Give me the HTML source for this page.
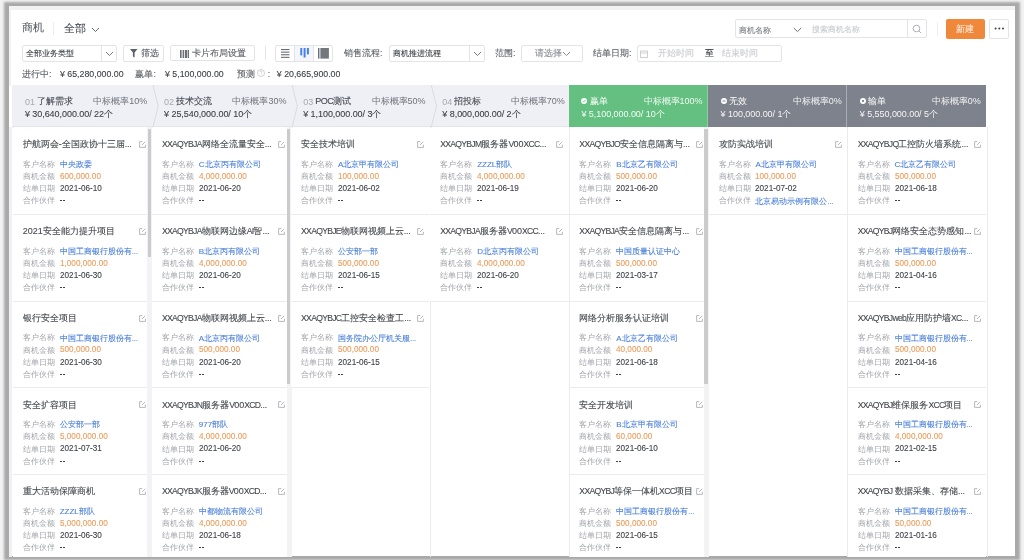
<!DOCTYPE html>
<html><head><meta charset="utf-8">
<style>
*{margin:0;padding:0;box-sizing:border-box}
html,body{width:1024px;height:560px;overflow:hidden;background:#f1f1f1;font-family:"Liberation Sans",sans-serif}
.t,.ctitle,.val,.hname,.hamt{-webkit-text-stroke:0.1px currentColor}
#shadow{position:absolute;left:3.5px;top:1.9px;width:1016px;height:558.1px;background:#a9a9a9;filter:blur(1.2px)}
#frame{position:absolute;left:9px;top:5.5px;width:1006px;height:550.7px;background:#fff;overflow:hidden}
#topstrip{position:absolute;left:0;top:0;width:1006px;height:4px;background:#f1f1f1}
.abs{position:absolute}
#root{position:absolute;left:0;top:0;width:1024px;height:560px;clip-path:inset(5.5px 9px 3.8px 9px);filter:url(#sb)}
.t{position:absolute;white-space:nowrap}
.box{position:absolute;border:1px solid #e3e4e8;border-radius:2px;background:#fff}
.hc{position:absolute;top:85px;height:42.2px;background:#eff0f5;border-bottom:1px solid #e5e5eb}
.hc.green,.hc.grayh{border-bottom:0}
.hc.green{background:#63c080}
.hc.grayh{background:#7e828c}
.hnum{position:absolute;top:96.6px;font-size:9px;line-height:10px;color:#a6a9b0;white-space:nowrap}
.hname{position:absolute;top:95.8px;font-size:9px;line-height:10px;color:#44474f;white-space:nowrap}
.hicon{position:absolute;top:97.5px;width:6px;height:6px;line-height:0}
.hrate{position:absolute;top:95.5px;font-size:9px;line-height:10px;color:#6f727a;text-align:right;white-space:nowrap}
.hamt{position:absolute;top:108.9px;font-size:9px;letter-spacing:-0.05px;line-height:10px;color:#3d4047;white-space:nowrap}
.w{color:#fff}
.hrate.w{color:rgba(255,255,255,0.9)}
.hamt.w{color:rgba(255,255,255,0.92)}
.chev{position:absolute;left:0;top:0;pointer-events:none}
.vline{position:absolute;top:127.3px;width:1px;height:440px;background:#ebebef}
.card{position:absolute;height:86.77px;background:#fff;border-bottom:1px solid #ebebef}
.ctitle{position:absolute;font-size:9px;line-height:10px;color:#45484e;white-space:nowrap}
.w{-webkit-text-stroke:0 !important}
.hname .l{letter-spacing:-0.45px}
.el{letter-spacing:-0.25px}
.ctitle .l{font-size:8.6px;letter-spacing:-0.7px}
.edit{position:absolute;width:7px;height:7px;line-height:0}
.lab{position:absolute;font-size:8px;line-height:9px;color:#a3a5ab;white-space:nowrap}
.val{position:absolute;font-size:8px;line-height:9px;white-space:nowrap}
.val.blue{color:#4a7fd9}
.val.orange{color:#e99c5c}
.val.dark{color:#3b3e45}
.val.num{font-size:8.8px;transform:scaleX(0.93);transform-origin:0 50%}
.dash{position:absolute;width:2px;height:1px;background:#3d4047}
.sb{position:absolute;width:3.2px;background:#cbcbce;border-radius:0.5px}
.track{position:absolute;width:5.2px;background:#f3f3f5}
</style></head><body><svg width="0" height="0" style="position:absolute"><filter id="sb" x="0" y="0" width="100%" height="100%"><feGaussianBlur stdDeviation="0.5"/></filter></svg>
<div id="shadow"></div><div id="frame"><div id="topstrip"></div><div style="position:absolute;left:0;top:0;width:1.6px;height:80px;background:#f2f2f2"></div></div>
<div id="root">
<!-- header -->
<div class="t" style="left:21.6px;top:20.9px;font-size:11.2px;line-height:13px;color:#5b5f67">商机</div>
<div class="abs" style="left:53px;top:22px;width:1px;height:13px;background:#ececec"></div>
<div class="t" style="left:64px;top:22.3px;font-size:11px;line-height:13px;color:#4b4e56">全部</div>
<svg class="abs" style="left:91px;top:27px" width="9" height="6" viewBox="0 0 9 6"><path d="M1 1 L4.5 4.5 L8 1" fill="none" stroke="#6b6e75" stroke-width="1"/></svg>

<!-- search group -->
<div class="box" style="left:735px;top:19.3px;width:192px;height:19.1px"></div>
<div class="abs" style="left:906.9px;top:19.5px;width:1px;height:18.8px;background:#e3e4e8"></div>
<div class="t" style="left:739.3px;top:25.6px;font-size:8.2px;line-height:10px;color:#7b7e85">商机名称</div>
<svg class="abs" style="left:793px;top:26.5px" width="9" height="6" viewBox="0 0 9 6"><path d="M0.8 1 L4.5 4.6 L8.2 1" fill="none" stroke="#6b6e75" stroke-width="1"/></svg>
<div class="t" style="left:811.5px;top:25.3px;font-size:8.2px;line-height:10px;color:#c9cbd0">搜索商机名称</div>
<svg class="abs" style="left:912px;top:24px" width="10" height="10" viewBox="0 0 10 10"><circle cx="4.5" cy="4.5" r="3.3" fill="none" stroke="#a4a7ad" stroke-width="0.9"/><path d="M7 7 L9 9" stroke="#a4a7ad" stroke-width="0.9"/></svg>
<div class="abs" style="left:937px;top:22px;width:1px;height:14px;background:#efefef"></div>
<div class="abs" style="left:946.4px;top:19.4px;width:39px;height:19.3px;background:#f0883a;border-radius:2px"></div>
<div class="t" style="left:956px;top:24px;font-size:9px;line-height:10px;color:#fce9da">新建</div>
<div class="box" style="left:989.4px;top:19.4px;width:19.2px;height:19.3px"></div>
<svg class="abs" style="left:994px;top:27px" width="12" height="4" viewBox="0 0 12 4"><circle cx="1.6" cy="1.5" r="1" fill="#3d4047"/><circle cx="5.3" cy="1.5" r="1" fill="#3d4047"/><circle cx="9" cy="1.5" r="1" fill="#3d4047"/></svg>

<!-- toolbar -->
<div class="box" style="left:22px;top:45px;width:95px;height:16.5px"></div>
<div class="abs" style="left:101px;top:45.5px;width:1px;height:15.5px;background:#e3e4e8"></div>
<div class="t" style="left:26px;top:48.1px;font-size:8.3px;line-height:10px;color:#3d4047">全部业务类型</div>
<svg class="abs" style="left:105px;top:51px" width="9" height="6" viewBox="0 0 9 6"><path d="M1 1 L4.5 4.5 L8 1" fill="none" stroke="#7a7d84" stroke-width="1"/></svg>

<div class="box" style="left:123.3px;top:44.5px;width:40.5px;height:17px"></div>
<svg class="abs" style="left:129.7px;top:49px" width="8" height="9" viewBox="0 0 8 9"><path d="M0 0 H7.5 L4.6 3.6 V8.6 L2.9 7.5 V3.6 Z" fill="#5d6067"/></svg>
<div class="t" style="left:140.7px;top:48.1px;font-size:8.6px;line-height:10px;color:#5d6067">筛选</div>

<div class="box" style="left:169.5px;top:44.6px;width:85px;height:16.8px"></div>
<svg class="abs" style="left:180px;top:49.8px" width="9" height="8.4" viewBox="0 0 9 8.4"><rect x="0" y="0" width="1.6" height="8.4" fill="#6b6e75"/><rect x="2.6" y="0" width="1.6" height="8.4" fill="#6b6e75"/><rect x="5" y="0" width="2.2" height="8.4" fill="#6b6e75"/><rect x="7.8" y="0" width="1.2" height="8.4" fill="#6b6e75"/></svg>
<div class="t" style="left:191.9px;top:48.1px;font-size:8.7px;line-height:10px;color:#5d6067">卡片布局设置</div>

<div class="abs" style="left:265px;top:46px;width:1px;height:14px;background:#e6e6e6"></div>

<div class="box" style="left:274.8px;top:44.6px;width:58px;height:17px"></div>
<div class="abs" style="left:294.5px;top:45.5px;width:18.5px;height:15.5px;background:#f4f6fa"></div>
<div class="abs" style="left:294.3px;top:45px;width:1px;height:16.5px;background:#e3e4e8"></div>
<div class="abs" style="left:312.8px;top:45px;width:1px;height:16.5px;background:#e3e4e8"></div>
<svg class="abs" style="left:281px;top:49px" width="9" height="9" viewBox="0 0 9 9"><rect x="0" y="0" width="8.5" height="1.1" fill="#6b6e75"/><rect x="0" y="2.6" width="8.5" height="1.1" fill="#6b6e75"/><rect x="0" y="5.2" width="8.5" height="1.1" fill="#6b6e75"/><rect x="0" y="7.8" width="8.5" height="1.1" fill="#6b6e75"/></svg>
<svg class="abs" style="left:300px;top:48.2px" width="10" height="10" viewBox="0 0 10 10"><rect x="0.3" y="0" width="1.9" height="7.4" fill="#4680ea"/><rect x="3.6" y="0" width="2" height="9.5" fill="#4680ea"/><rect x="6.9" y="0" width="2" height="6.4" fill="#4680ea"/></svg>
<svg class="abs" style="left:318px;top:48px" width="11" height="11" viewBox="0 0 11 11"><rect x="0" y="0" width="1.3" height="10.6" fill="#6b6e75"/><rect x="1.3" y="0" width="1.2" height="10.6" fill="#b9bbc0"/><rect x="2.5" y="0" width="8.4" height="10.6" fill="#74777e"/></svg>

<div class="t" style="left:344px;top:48.1px;font-size:8.7px;line-height:10px;color:#5d6067">销售流程:</div>
<div class="box" style="left:388.6px;top:45px;width:96.4px;height:16.5px"></div>
<div class="abs" style="left:468.6px;top:45.5px;width:1px;height:15.5px;background:#e3e4e8"></div>
<div class="t" style="left:392.5px;top:48.1px;font-size:8.4px;line-height:10px;color:#3d4047">商机推进流程</div>
<svg class="abs" style="left:472.5px;top:51px" width="9" height="6" viewBox="0 0 9 6"><path d="M1 1 L4.5 4.5 L8 1" fill="none" stroke="#7a7d84" stroke-width="1"/></svg>

<div class="t" style="left:495px;top:48.1px;font-size:8.7px;line-height:10px;color:#5d6067">范围:</div>
<div class="box" style="left:521px;top:45px;width:61.6px;height:16.5px"></div>
<div class="t" style="left:535px;top:48.1px;font-size:8.7px;line-height:10px;color:#8a8d94">请选择</div>
<svg class="abs" style="left:562px;top:51px" width="9" height="6" viewBox="0 0 9 6"><path d="M1 1 L4.5 4.5 L8 1" fill="none" stroke="#8a8d94" stroke-width="1"/></svg>

<div class="t" style="left:593px;top:48.1px;font-size:8.7px;line-height:10px;color:#5d6067">结单日期:</div>
<div class="box" style="left:637px;top:45px;width:144.7px;height:16.5px"></div>
<svg class="abs" style="left:640px;top:49.5px" width="8" height="8" viewBox="0 0 8 8"><rect x="0.5" y="1" width="7" height="6.5" fill="none" stroke="#c9cbd0" stroke-width="0.9"/><rect x="0.5" y="2.5" width="7" height="0.9" fill="#c9cbd0"/></svg>
<div class="t" style="left:657.8px;top:48.1px;font-size:8.6px;line-height:10px;color:#c9cbd0">开始时间</div>
<div class="t" style="left:704.7px;top:48.1px;font-size:8.6px;line-height:10px;color:#3d4047">至</div>
<div class="t" style="left:722px;top:48.1px;font-size:8.6px;line-height:10px;color:#c9cbd0">结束时间</div>

<!-- stats -->
<div class="t" style="left:22px;top:68.5px;font-size:8.8px;line-height:10px;color:#5d6067">进行中:</div>
<div class="t" style="left:60px;top:68.5px;font-size:8.8px;line-height:10px;color:#3d4047">¥ 65,280,000.00</div>
<div class="t" style="left:135.4px;top:68.5px;font-size:8.8px;line-height:10px;color:#5d6067">赢单:</div>
<div class="t" style="left:165px;top:68.5px;font-size:8.8px;line-height:10px;color:#3d4047">¥ 5,100,000.00</div>
<div class="t" style="left:236.6px;top:68.5px;font-size:8.8px;line-height:10px;color:#5d6067">预测</div>
<svg class="abs" style="left:257.2px;top:69.3px" width="8" height="8" viewBox="0 0 16 16"><circle cx="8" cy="8" r="7" fill="none" stroke="#b3b5ba" stroke-width="1.2"/><path d="M5.8 6.2 C5.8 4.6 7 4 8 4 C9.2 4 10.2 4.8 10.2 6 C10.2 7.4 8.2 7.6 8.2 9.2" fill="none" stroke="#b3b5ba" stroke-width="1.2"/><circle cx="8.2" cy="11.6" r="0.8" fill="#b3b5ba"/></svg>
<div class="t" style="left:267.8px;top:68.5px;font-size:8.8px;line-height:10px;color:#5d6067">:</div>
<div class="t" style="left:276.8px;top:68.5px;font-size:8.8px;line-height:10px;color:#3d4047">¥ 20,665,900.00</div>

<div class="hc" style="left:12.00px;width:139.44px"></div>
<div class="hnum" style="left:24.90px">01</div>
<div class="hname" style="left:36.90px">了解需求</div>
<div class="hrate" style="left:12.00px;width:135.30px">中标概率10%</div>
<div class="hamt" style="left:24.90px">¥ 30,640,000.00/ 22个</div>
<div class="hc" style="left:151.14px;width:139.44px"></div>
<div class="hnum" style="left:164.04px">02</div>
<div class="hname" style="left:176.04px">技术交流</div>
<div class="hrate" style="left:151.14px;width:135.30px">中标概率30%</div>
<div class="hamt" style="left:164.04px">¥ 25,540,000.00/ 10个</div>
<div class="hc" style="left:290.29px;width:139.44px"></div>
<div class="hnum" style="left:303.19px">03</div>
<div class="hname" style="left:315.19px"><span class="l">POC</span>测试</div>
<div class="hrate" style="left:290.29px;width:135.30px">中标概率50%</div>
<div class="hamt" style="left:303.19px">¥ 1,100,000.00/ 3个</div>
<div class="hc" style="left:429.43px;width:139.44px"></div>
<div class="hnum" style="left:442.33px">04</div>
<div class="hname" style="left:454.33px">招投标</div>
<div class="hrate" style="left:429.43px;width:135.30px">中标概率70%</div>
<div class="hamt" style="left:442.33px">¥ 8,000,000.00/ 2个</div>
<div class="hc green" style="left:568.57px;width:139.44px"></div>
<div class="hicon" style="left:581.47px"><svg width="6" height="6" viewBox="0 0 12 12"><circle cx="6" cy="6" r="6" fill="#fff"/><path d="M3.2 6.2 L5.2 8 L8.8 4.2" stroke="#63c080" stroke-width="1.8" fill="none"/></svg></div>
<div class="hname w" style="left:589.77px">赢单</div>
<div class="hrate w" style="left:568.57px;width:134.00px">中标概率100%</div>
<div class="hamt w" style="left:581.47px">¥ 5,100,000.00/ 10个</div>
<div class="hc grayh" style="left:707.72px;width:139.44px"></div>
<div class="hicon" style="left:720.62px"><svg width="6" height="6" viewBox="0 0 12 12"><circle cx="6" cy="6" r="6" fill="#fff"/><rect x="3" y="5" width="6" height="2" fill="#7e828c"/></svg></div>
<div class="hname w" style="left:728.92px">无效</div>
<div class="hrate w" style="left:707.72px;width:134.00px">中标概率0%</div>
<div class="hamt w" style="left:720.62px">¥ 100,000.00/ 1个</div>
<div class="hc grayh" style="left:846.86px;width:139.44px"></div>
<div class="hicon" style="left:859.76px"><svg width="6" height="6" viewBox="0 0 12 12"><circle cx="6" cy="6" r="6" fill="#fff"/><path d="M4 4 L8 8 M8 4 L4 8" stroke="#7e828c" stroke-width="1.8"/></svg></div>
<div class="hname w" style="left:868.06px">输单</div>
<div class="hrate w" style="left:846.86px;width:134.00px">中标概率0%</div>
<div class="hamt w" style="left:859.76px">¥ 5,550,000.00/ 5个</div>
<div class="abs" style="left:707.22px;top:85px;width:1px;height:42.3px;background:rgba(255,255,255,0.25)"></div>
<div class="abs" style="left:846.36px;top:85px;width:1px;height:42.3px;background:rgba(255,255,255,0.35)"></div>
<svg class="chev" width="1024" height="560"><polyline points="152.94,85 158.24,106.2 152.84,127.4" fill="none" stroke="#d9dbe1" stroke-width="1"/><polyline points="292.09,85 297.39,106.2 291.99,127.4" fill="none" stroke="#d9dbe1" stroke-width="1"/><polyline points="431.23,85 436.53,106.2 431.13,127.4" fill="none" stroke="#d9dbe1" stroke-width="1"/></svg>
<div class="abs" style="left:9px;top:127.3px;width:3.2px;height:440px;background:#f1f1f5"></div>
<div class="vline" style="left:12.50px"></div>
<div class="vline" style="left:151.64px"></div>
<div class="vline" style="left:290.79px"></div>
<div class="vline" style="left:429.93px"></div>
<div class="vline" style="left:569.07px"></div>
<div class="vline" style="left:708.22px"></div>
<div class="vline" style="left:847.36px"></div>
<div class="vline" style="left:986.50px"></div>
<div class="card" style="left:13.00px;top:128.00px;width:138.14px"></div>
<div class="ctitle" style="left:22.80px;top:139.40px">护航两会-全国政协十三届<span class="el">...</span></div>
<div class="edit" style="left:139.00px;top:141.00px"><svg width="7" height="7" viewBox="0 0 14 14"><path d="M6.5 1.2 H1.2 V12.8 H12.8 V7.5" fill="none" stroke="#b3b5bb" stroke-width="1.9"/><path d="M6 8 L12.4 1.6" stroke="#b3b5bb" stroke-width="1.9"/></svg></div>
<div class="lab" style="left:22.80px;top:159.80px">客户名称</div>
<div class="val blue" style="left:59.70px;top:160.05px">中央政委</div>
<div class="lab" style="left:22.80px;top:172.00px">商机金额</div>
<div class="val num orange" style="left:59.70px;top:171.95px">600,000.00</div>
<div class="lab" style="left:22.80px;top:184.20px">结单日期</div>
<div class="val num dark" style="left:59.70px;top:184.15px">2021-06-10</div>
<div class="lab" style="left:22.80px;top:196.40px">合作伙伴</div>
<div class="dash" style="left:60px;top:200px"></div><div class="dash" style="left:63px;top:200px"></div>
<div class="card" style="left:13.00px;top:214.77px;width:138.14px"></div>
<div class="ctitle" style="left:22.80px;top:226.17px">2021安全能力提升项目</div>
<div class="edit" style="left:139.00px;top:227.77px"><svg width="7" height="7" viewBox="0 0 14 14"><path d="M6.5 1.2 H1.2 V12.8 H12.8 V7.5" fill="none" stroke="#b3b5bb" stroke-width="1.9"/><path d="M6 8 L12.4 1.6" stroke="#b3b5bb" stroke-width="1.9"/></svg></div>
<div class="lab" style="left:22.80px;top:246.57px">客户名称</div>
<div class="val blue" style="left:59.70px;top:246.82px">中国工商银行股份有<span class="el">...</span></div>
<div class="lab" style="left:22.80px;top:258.77px">商机金额</div>
<div class="val num orange" style="left:59.70px;top:258.72px">1,000,000.00</div>
<div class="lab" style="left:22.80px;top:270.97px">结单日期</div>
<div class="val num dark" style="left:59.70px;top:270.92px">2021-06-30</div>
<div class="lab" style="left:22.80px;top:283.17px">合作伙伴</div>
<div class="dash" style="left:60px;top:287px"></div><div class="dash" style="left:63px;top:287px"></div>
<div class="card" style="left:13.00px;top:301.54px;width:138.14px"></div>
<div class="ctitle" style="left:22.80px;top:312.94px">银行安全项目</div>
<div class="edit" style="left:139.00px;top:314.54px"><svg width="7" height="7" viewBox="0 0 14 14"><path d="M6.5 1.2 H1.2 V12.8 H12.8 V7.5" fill="none" stroke="#b3b5bb" stroke-width="1.9"/><path d="M6 8 L12.4 1.6" stroke="#b3b5bb" stroke-width="1.9"/></svg></div>
<div class="lab" style="left:22.80px;top:333.34px">客户名称</div>
<div class="val blue" style="left:59.70px;top:333.59px">中国工商银行股份有<span class="el">...</span></div>
<div class="lab" style="left:22.80px;top:345.54px">商机金额</div>
<div class="val num orange" style="left:59.70px;top:345.49px">500,000.00</div>
<div class="lab" style="left:22.80px;top:357.74px">结单日期</div>
<div class="val num dark" style="left:59.70px;top:357.69px">2021-06-30</div>
<div class="lab" style="left:22.80px;top:369.94px">合作伙伴</div>
<div class="dash" style="left:60px;top:374px"></div><div class="dash" style="left:63px;top:374px"></div>
<div class="card" style="left:13.00px;top:388.31px;width:138.14px"></div>
<div class="ctitle" style="left:22.80px;top:399.71px">安全扩容项目</div>
<div class="edit" style="left:139.00px;top:401.31px"><svg width="7" height="7" viewBox="0 0 14 14"><path d="M6.5 1.2 H1.2 V12.8 H12.8 V7.5" fill="none" stroke="#b3b5bb" stroke-width="1.9"/><path d="M6 8 L12.4 1.6" stroke="#b3b5bb" stroke-width="1.9"/></svg></div>
<div class="lab" style="left:22.80px;top:420.11px">客户名称</div>
<div class="val blue" style="left:59.70px;top:420.36px">公安部一部</div>
<div class="lab" style="left:22.80px;top:432.31px">商机金额</div>
<div class="val num orange" style="left:59.70px;top:432.26px">5,000,000.00</div>
<div class="lab" style="left:22.80px;top:444.51px">结单日期</div>
<div class="val num dark" style="left:59.70px;top:444.46px">2021-07-31</div>
<div class="lab" style="left:22.80px;top:456.71px">合作伙伴</div>
<div class="dash" style="left:60px;top:461px"></div><div class="dash" style="left:63px;top:461px"></div>
<div class="card" style="left:13.00px;top:475.08px;width:138.14px"></div>
<div class="ctitle" style="left:22.80px;top:486.48px">重大活动保障商机</div>
<div class="edit" style="left:139.00px;top:488.08px"><svg width="7" height="7" viewBox="0 0 14 14"><path d="M6.5 1.2 H1.2 V12.8 H12.8 V7.5" fill="none" stroke="#b3b5bb" stroke-width="1.9"/><path d="M6 8 L12.4 1.6" stroke="#b3b5bb" stroke-width="1.9"/></svg></div>
<div class="lab" style="left:22.80px;top:506.88px">客户名称</div>
<div class="val blue" style="left:59.70px;top:507.13px"><span class="l">ZZZL</span>部队</div>
<div class="lab" style="left:22.80px;top:519.08px">商机金额</div>
<div class="val num orange" style="left:59.70px;top:519.03px">5,000,000.00</div>
<div class="lab" style="left:22.80px;top:531.28px">结单日期</div>
<div class="val num dark" style="left:59.70px;top:531.23px">2021-06-30</div>
<div class="lab" style="left:22.80px;top:543.48px">合作伙伴</div>
<div class="dash" style="left:60px;top:547px"></div><div class="dash" style="left:63px;top:547px"></div>
<div class="track" style="left:147.44px;top:127.3px;height:440px"></div>
<div class="sb" style="left:147.84px;top:128.5px;height:128.30px"></div>
<div class="card" style="left:152.14px;top:128.00px;width:138.14px"></div>
<div class="ctitle" style="left:161.94px;top:139.40px"><span class="l">XXAQYBJA</span>网络全流量安全<span class="el">...</span></div>
<div class="edit" style="left:278.14px;top:141.00px"><svg width="7" height="7" viewBox="0 0 14 14"><path d="M6.5 1.2 H1.2 V12.8 H12.8 V7.5" fill="none" stroke="#b3b5bb" stroke-width="1.9"/><path d="M6 8 L12.4 1.6" stroke="#b3b5bb" stroke-width="1.9"/></svg></div>
<div class="lab" style="left:161.94px;top:159.80px">客户名称</div>
<div class="val blue" style="left:198.84px;top:160.05px"><span class="l">C</span>北京丙有限公司</div>
<div class="lab" style="left:161.94px;top:172.00px">商机金额</div>
<div class="val num orange" style="left:198.84px;top:171.95px">4,000,000.00</div>
<div class="lab" style="left:161.94px;top:184.20px">结单日期</div>
<div class="val num dark" style="left:198.84px;top:184.15px">2021-06-20</div>
<div class="lab" style="left:161.94px;top:196.40px">合作伙伴</div>
<div class="dash" style="left:199px;top:200px"></div><div class="dash" style="left:202px;top:200px"></div>
<div class="card" style="left:152.14px;top:214.77px;width:138.14px"></div>
<div class="ctitle" style="left:161.94px;top:226.17px"><span class="l">XXAQYBJA</span>物联网边缘<span class="l">AI</span>智<span class="el">...</span></div>
<div class="edit" style="left:278.14px;top:227.77px"><svg width="7" height="7" viewBox="0 0 14 14"><path d="M6.5 1.2 H1.2 V12.8 H12.8 V7.5" fill="none" stroke="#b3b5bb" stroke-width="1.9"/><path d="M6 8 L12.4 1.6" stroke="#b3b5bb" stroke-width="1.9"/></svg></div>
<div class="lab" style="left:161.94px;top:246.57px">客户名称</div>
<div class="val blue" style="left:198.84px;top:246.82px"><span class="l">B</span>北京丙有限公司</div>
<div class="lab" style="left:161.94px;top:258.77px">商机金额</div>
<div class="val num orange" style="left:198.84px;top:258.72px">4,000,000.00</div>
<div class="lab" style="left:161.94px;top:270.97px">结单日期</div>
<div class="val num dark" style="left:198.84px;top:270.92px">2021-06-20</div>
<div class="lab" style="left:161.94px;top:283.17px">合作伙伴</div>
<div class="dash" style="left:199px;top:287px"></div><div class="dash" style="left:202px;top:287px"></div>
<div class="card" style="left:152.14px;top:301.54px;width:138.14px"></div>
<div class="ctitle" style="left:161.94px;top:312.94px"><span class="l">XXAQYBJA</span>物联网视频上云<span class="el">...</span></div>
<div class="edit" style="left:278.14px;top:314.54px"><svg width="7" height="7" viewBox="0 0 14 14"><path d="M6.5 1.2 H1.2 V12.8 H12.8 V7.5" fill="none" stroke="#b3b5bb" stroke-width="1.9"/><path d="M6 8 L12.4 1.6" stroke="#b3b5bb" stroke-width="1.9"/></svg></div>
<div class="lab" style="left:161.94px;top:333.34px">客户名称</div>
<div class="val blue" style="left:198.84px;top:333.59px"><span class="l">A</span>北京丙有限公司</div>
<div class="lab" style="left:161.94px;top:345.54px">商机金额</div>
<div class="val num orange" style="left:198.84px;top:345.49px">500,000.00</div>
<div class="lab" style="left:161.94px;top:357.74px">结单日期</div>
<div class="val num dark" style="left:198.84px;top:357.69px">2021-06-20</div>
<div class="lab" style="left:161.94px;top:369.94px">合作伙伴</div>
<div class="dash" style="left:199px;top:374px"></div><div class="dash" style="left:202px;top:374px"></div>
<div class="card" style="left:152.14px;top:388.31px;width:138.14px"></div>
<div class="ctitle" style="left:161.94px;top:399.71px"><span class="l">XXAQYBJN</span>服务器<span class="l">V</span>00<span class="l">XCD</span><span class="el">...</span></div>
<div class="edit" style="left:278.14px;top:401.31px"><svg width="7" height="7" viewBox="0 0 14 14"><path d="M6.5 1.2 H1.2 V12.8 H12.8 V7.5" fill="none" stroke="#b3b5bb" stroke-width="1.9"/><path d="M6 8 L12.4 1.6" stroke="#b3b5bb" stroke-width="1.9"/></svg></div>
<div class="lab" style="left:161.94px;top:420.11px">客户名称</div>
<div class="val blue" style="left:198.84px;top:420.36px">977部队</div>
<div class="lab" style="left:161.94px;top:432.31px">商机金额</div>
<div class="val num orange" style="left:198.84px;top:432.26px">4,000,000.00</div>
<div class="lab" style="left:161.94px;top:444.51px">结单日期</div>
<div class="val num dark" style="left:198.84px;top:444.46px">2021-06-20</div>
<div class="lab" style="left:161.94px;top:456.71px">合作伙伴</div>
<div class="dash" style="left:199px;top:461px"></div><div class="dash" style="left:202px;top:461px"></div>
<div class="card" style="left:152.14px;top:475.08px;width:138.14px"></div>
<div class="ctitle" style="left:161.94px;top:486.48px"><span class="l">XXAQYBJK</span>服务器<span class="l">V</span>00<span class="l">XCD</span><span class="el">...</span></div>
<div class="edit" style="left:278.14px;top:488.08px"><svg width="7" height="7" viewBox="0 0 14 14"><path d="M6.5 1.2 H1.2 V12.8 H12.8 V7.5" fill="none" stroke="#b3b5bb" stroke-width="1.9"/><path d="M6 8 L12.4 1.6" stroke="#b3b5bb" stroke-width="1.9"/></svg></div>
<div class="lab" style="left:161.94px;top:506.88px">客户名称</div>
<div class="val blue" style="left:198.84px;top:507.13px">中都物流有限公司</div>
<div class="lab" style="left:161.94px;top:519.08px">商机金额</div>
<div class="val num orange" style="left:198.84px;top:519.03px">4,000,000.00</div>
<div class="lab" style="left:161.94px;top:531.28px">结单日期</div>
<div class="val num dark" style="left:198.84px;top:531.23px">2021-06-18</div>
<div class="lab" style="left:161.94px;top:543.48px">合作伙伴</div>
<div class="dash" style="left:199px;top:547px"></div><div class="dash" style="left:202px;top:547px"></div>
<div class="track" style="left:286.59px;top:127.3px;height:440px"></div>
<div class="sb" style="left:286.99px;top:128.5px;height:255.10px"></div>
<div class="card" style="left:291.29px;top:128.00px;width:138.14px"></div>
<div class="ctitle" style="left:301.09px;top:139.40px">安全技术培训</div>
<div class="edit" style="left:417.29px;top:141.00px"><svg width="7" height="7" viewBox="0 0 14 14"><path d="M6.5 1.2 H1.2 V12.8 H12.8 V7.5" fill="none" stroke="#b3b5bb" stroke-width="1.9"/><path d="M6 8 L12.4 1.6" stroke="#b3b5bb" stroke-width="1.9"/></svg></div>
<div class="lab" style="left:301.09px;top:159.80px">客户名称</div>
<div class="val blue" style="left:337.99px;top:160.05px"><span class="l">A</span>北京甲有限公司</div>
<div class="lab" style="left:301.09px;top:172.00px">商机金额</div>
<div class="val num orange" style="left:337.99px;top:171.95px">100,000.00</div>
<div class="lab" style="left:301.09px;top:184.20px">结单日期</div>
<div class="val num dark" style="left:337.99px;top:184.15px">2021-06-02</div>
<div class="lab" style="left:301.09px;top:196.40px">合作伙伴</div>
<div class="dash" style="left:338px;top:200px"></div><div class="dash" style="left:341px;top:200px"></div>
<div class="card" style="left:291.29px;top:214.77px;width:138.14px"></div>
<div class="ctitle" style="left:301.09px;top:226.17px"><span class="l">XXAQYBJE</span>物联网视频上云<span class="el">...</span></div>
<div class="edit" style="left:417.29px;top:227.77px"><svg width="7" height="7" viewBox="0 0 14 14"><path d="M6.5 1.2 H1.2 V12.8 H12.8 V7.5" fill="none" stroke="#b3b5bb" stroke-width="1.9"/><path d="M6 8 L12.4 1.6" stroke="#b3b5bb" stroke-width="1.9"/></svg></div>
<div class="lab" style="left:301.09px;top:246.57px">客户名称</div>
<div class="val blue" style="left:337.99px;top:246.82px">公安部一部</div>
<div class="lab" style="left:301.09px;top:258.77px">商机金额</div>
<div class="val num orange" style="left:337.99px;top:258.72px">500,000.00</div>
<div class="lab" style="left:301.09px;top:270.97px">结单日期</div>
<div class="val num dark" style="left:337.99px;top:270.92px">2021-06-15</div>
<div class="lab" style="left:301.09px;top:283.17px">合作伙伴</div>
<div class="dash" style="left:338px;top:287px"></div><div class="dash" style="left:341px;top:287px"></div>
<div class="card" style="left:291.29px;top:301.54px;width:138.14px"></div>
<div class="ctitle" style="left:301.09px;top:312.94px"><span class="l">XXAQYBJC</span>工控安全检查工<span class="el">...</span></div>
<div class="edit" style="left:417.29px;top:314.54px"><svg width="7" height="7" viewBox="0 0 14 14"><path d="M6.5 1.2 H1.2 V12.8 H12.8 V7.5" fill="none" stroke="#b3b5bb" stroke-width="1.9"/><path d="M6 8 L12.4 1.6" stroke="#b3b5bb" stroke-width="1.9"/></svg></div>
<div class="lab" style="left:301.09px;top:333.34px">客户名称</div>
<div class="val blue" style="left:337.99px;top:333.59px">国务院办公厅机关服<span class="el">...</span></div>
<div class="lab" style="left:301.09px;top:345.54px">商机金额</div>
<div class="val num orange" style="left:337.99px;top:345.49px">500,000.00</div>
<div class="lab" style="left:301.09px;top:357.74px">结单日期</div>
<div class="val num dark" style="left:337.99px;top:357.69px">2021-06-15</div>
<div class="lab" style="left:301.09px;top:369.94px">合作伙伴</div>
<div class="dash" style="left:338px;top:374px"></div><div class="dash" style="left:341px;top:374px"></div>
<div class="card" style="left:430.43px;top:128.00px;width:138.14px"></div>
<div class="ctitle" style="left:440.23px;top:139.40px"><span class="l">XXAQYBJM</span>服务器<span class="l">V</span>00<span class="l">XCC</span><span class="el">...</span></div>
<div class="edit" style="left:556.43px;top:141.00px"><svg width="7" height="7" viewBox="0 0 14 14"><path d="M6.5 1.2 H1.2 V12.8 H12.8 V7.5" fill="none" stroke="#b3b5bb" stroke-width="1.9"/><path d="M6 8 L12.4 1.6" stroke="#b3b5bb" stroke-width="1.9"/></svg></div>
<div class="lab" style="left:440.23px;top:159.80px">客户名称</div>
<div class="val blue" style="left:477.13px;top:160.05px"><span class="l">ZZZL</span>部队</div>
<div class="lab" style="left:440.23px;top:172.00px">商机金额</div>
<div class="val num orange" style="left:477.13px;top:171.95px">4,000,000.00</div>
<div class="lab" style="left:440.23px;top:184.20px">结单日期</div>
<div class="val num dark" style="left:477.13px;top:184.15px">2021-06-19</div>
<div class="lab" style="left:440.23px;top:196.40px">合作伙伴</div>
<div class="dash" style="left:477px;top:200px"></div><div class="dash" style="left:480px;top:200px"></div>
<div class="card" style="left:430.43px;top:214.77px;width:138.14px"></div>
<div class="ctitle" style="left:440.23px;top:226.17px"><span class="l">XXAQYBJA</span>服务器<span class="l">V</span>00<span class="l">XCC</span><span class="el">...</span></div>
<div class="edit" style="left:556.43px;top:227.77px"><svg width="7" height="7" viewBox="0 0 14 14"><path d="M6.5 1.2 H1.2 V12.8 H12.8 V7.5" fill="none" stroke="#b3b5bb" stroke-width="1.9"/><path d="M6 8 L12.4 1.6" stroke="#b3b5bb" stroke-width="1.9"/></svg></div>
<div class="lab" style="left:440.23px;top:246.57px">客户名称</div>
<div class="val blue" style="left:477.13px;top:246.82px"><span class="l">D</span>北京丙有限公司</div>
<div class="lab" style="left:440.23px;top:258.77px">商机金额</div>
<div class="val num orange" style="left:477.13px;top:258.72px">4,000,000.00</div>
<div class="lab" style="left:440.23px;top:270.97px">结单日期</div>
<div class="val num dark" style="left:477.13px;top:270.92px">2021-06-20</div>
<div class="lab" style="left:440.23px;top:283.17px">合作伙伴</div>
<div class="dash" style="left:477px;top:287px"></div><div class="dash" style="left:480px;top:287px"></div>
<div class="card" style="left:569.57px;top:128.00px;width:138.14px"></div>
<div class="ctitle" style="left:579.37px;top:139.40px"><span class="l">XXAQYBJO</span>安全信息隔离与<span class="el">...</span></div>
<div class="edit" style="left:695.57px;top:141.00px"><svg width="7" height="7" viewBox="0 0 14 14"><path d="M6.5 1.2 H1.2 V12.8 H12.8 V7.5" fill="none" stroke="#b3b5bb" stroke-width="1.9"/><path d="M6 8 L12.4 1.6" stroke="#b3b5bb" stroke-width="1.9"/></svg></div>
<div class="lab" style="left:579.37px;top:159.80px">客户名称</div>
<div class="val blue" style="left:616.27px;top:160.05px"><span class="l">B</span>北京乙有限公司</div>
<div class="lab" style="left:579.37px;top:172.00px">商机金额</div>
<div class="val num orange" style="left:616.27px;top:171.95px">500,000.00</div>
<div class="lab" style="left:579.37px;top:184.20px">结单日期</div>
<div class="val num dark" style="left:616.27px;top:184.15px">2021-06-20</div>
<div class="lab" style="left:579.37px;top:196.40px">合作伙伴</div>
<div class="dash" style="left:616px;top:200px"></div><div class="dash" style="left:619px;top:200px"></div>
<div class="card" style="left:569.57px;top:214.77px;width:138.14px"></div>
<div class="ctitle" style="left:579.37px;top:226.17px"><span class="l">XXAQYBJA</span>安全信息隔离与<span class="el">...</span></div>
<div class="edit" style="left:695.57px;top:227.77px"><svg width="7" height="7" viewBox="0 0 14 14"><path d="M6.5 1.2 H1.2 V12.8 H12.8 V7.5" fill="none" stroke="#b3b5bb" stroke-width="1.9"/><path d="M6 8 L12.4 1.6" stroke="#b3b5bb" stroke-width="1.9"/></svg></div>
<div class="lab" style="left:579.37px;top:246.57px">客户名称</div>
<div class="val blue" style="left:616.27px;top:246.82px">中国质量认证中心</div>
<div class="lab" style="left:579.37px;top:258.77px">商机金额</div>
<div class="val num orange" style="left:616.27px;top:258.72px">500,000.00</div>
<div class="lab" style="left:579.37px;top:270.97px">结单日期</div>
<div class="val num dark" style="left:616.27px;top:270.92px">2021-03-17</div>
<div class="lab" style="left:579.37px;top:283.17px">合作伙伴</div>
<div class="dash" style="left:616px;top:287px"></div><div class="dash" style="left:619px;top:287px"></div>
<div class="card" style="left:569.57px;top:301.54px;width:138.14px"></div>
<div class="ctitle" style="left:579.37px;top:312.94px">网络分析服务认证培训</div>
<div class="edit" style="left:695.57px;top:314.54px"><svg width="7" height="7" viewBox="0 0 14 14"><path d="M6.5 1.2 H1.2 V12.8 H12.8 V7.5" fill="none" stroke="#b3b5bb" stroke-width="1.9"/><path d="M6 8 L12.4 1.6" stroke="#b3b5bb" stroke-width="1.9"/></svg></div>
<div class="lab" style="left:579.37px;top:333.34px">客户名称</div>
<div class="val blue" style="left:616.27px;top:333.59px"><span class="l">A</span>北京乙有限公司</div>
<div class="lab" style="left:579.37px;top:345.54px">商机金额</div>
<div class="val num orange" style="left:616.27px;top:345.49px">40,000.00</div>
<div class="lab" style="left:579.37px;top:357.74px">结单日期</div>
<div class="val num dark" style="left:616.27px;top:357.69px">2021-06-18</div>
<div class="lab" style="left:579.37px;top:369.94px">合作伙伴</div>
<div class="dash" style="left:616px;top:374px"></div><div class="dash" style="left:619px;top:374px"></div>
<div class="card" style="left:569.57px;top:388.31px;width:138.14px"></div>
<div class="ctitle" style="left:579.37px;top:399.71px">安全开发培训</div>
<div class="edit" style="left:695.57px;top:401.31px"><svg width="7" height="7" viewBox="0 0 14 14"><path d="M6.5 1.2 H1.2 V12.8 H12.8 V7.5" fill="none" stroke="#b3b5bb" stroke-width="1.9"/><path d="M6 8 L12.4 1.6" stroke="#b3b5bb" stroke-width="1.9"/></svg></div>
<div class="lab" style="left:579.37px;top:420.11px">客户名称</div>
<div class="val blue" style="left:616.27px;top:420.36px"><span class="l">B</span>北京甲有限公司</div>
<div class="lab" style="left:579.37px;top:432.31px">商机金额</div>
<div class="val num orange" style="left:616.27px;top:432.26px">60,000.00</div>
<div class="lab" style="left:579.37px;top:444.51px">结单日期</div>
<div class="val num dark" style="left:616.27px;top:444.46px">2021-06-10</div>
<div class="lab" style="left:579.37px;top:456.71px">合作伙伴</div>
<div class="dash" style="left:616px;top:461px"></div><div class="dash" style="left:619px;top:461px"></div>
<div class="card" style="left:569.57px;top:475.08px;width:138.14px"></div>
<div class="ctitle" style="left:579.37px;top:486.48px"><span class="l">XXAQYBJ</span>等保一体机<span class="l">XCC</span>项目</div>
<div class="edit" style="left:695.57px;top:488.08px"><svg width="7" height="7" viewBox="0 0 14 14"><path d="M6.5 1.2 H1.2 V12.8 H12.8 V7.5" fill="none" stroke="#b3b5bb" stroke-width="1.9"/><path d="M6 8 L12.4 1.6" stroke="#b3b5bb" stroke-width="1.9"/></svg></div>
<div class="lab" style="left:579.37px;top:506.88px">客户名称</div>
<div class="val blue" style="left:616.27px;top:507.13px">中国工商银行股份有<span class="el">...</span></div>
<div class="lab" style="left:579.37px;top:519.08px">商机金额</div>
<div class="val num orange" style="left:616.27px;top:519.03px">500,000.00</div>
<div class="lab" style="left:579.37px;top:531.28px">结单日期</div>
<div class="val num dark" style="left:616.27px;top:531.23px">2021-06-15</div>
<div class="lab" style="left:579.37px;top:543.48px">合作伙伴</div>
<div class="dash" style="left:616px;top:547px"></div><div class="dash" style="left:619px;top:547px"></div>
<div class="track" style="left:704.01px;top:127.3px;height:440px"></div>
<div class="sb" style="left:704.42px;top:128.5px;height:255.20px"></div>
<div class="card" style="left:708.72px;top:128.00px;width:138.14px"></div>
<div class="ctitle" style="left:718.51px;top:139.40px">攻防实战培训</div>
<div class="edit" style="left:834.72px;top:141.00px"><svg width="7" height="7" viewBox="0 0 14 14"><path d="M6.5 1.2 H1.2 V12.8 H12.8 V7.5" fill="none" stroke="#b3b5bb" stroke-width="1.9"/><path d="M6 8 L12.4 1.6" stroke="#b3b5bb" stroke-width="1.9"/></svg></div>
<div class="lab" style="left:718.51px;top:159.80px">客户名称</div>
<div class="val blue" style="left:755.42px;top:160.05px"><span class="l">A</span>北京甲有限公司</div>
<div class="lab" style="left:718.51px;top:172.00px">商机金额</div>
<div class="val num orange" style="left:755.42px;top:171.95px">100,000.00</div>
<div class="lab" style="left:718.51px;top:184.20px">结单日期</div>
<div class="val num dark" style="left:755.42px;top:184.15px">2021-07-02</div>
<div class="lab" style="left:718.51px;top:196.40px">合作伙伴</div>
<div class="val blue" style="left:755.42px;top:196.65px">北京易动示例有限公<span class="el">...</span></div>
<div class="card" style="left:847.86px;top:128.00px;width:138.14px"></div>
<div class="ctitle" style="left:857.66px;top:139.40px"><span class="l">XXAQYBJQ</span>工控防火墙系统<span class="el">...</span></div>
<div class="edit" style="left:973.86px;top:141.00px"><svg width="7" height="7" viewBox="0 0 14 14"><path d="M6.5 1.2 H1.2 V12.8 H12.8 V7.5" fill="none" stroke="#b3b5bb" stroke-width="1.9"/><path d="M6 8 L12.4 1.6" stroke="#b3b5bb" stroke-width="1.9"/></svg></div>
<div class="lab" style="left:857.66px;top:159.80px">客户名称</div>
<div class="val blue" style="left:894.56px;top:160.05px"><span class="l">C</span>北京乙有限公司</div>
<div class="lab" style="left:857.66px;top:172.00px">商机金额</div>
<div class="val num orange" style="left:894.56px;top:171.95px">500,000.00</div>
<div class="lab" style="left:857.66px;top:184.20px">结单日期</div>
<div class="val num dark" style="left:894.56px;top:184.15px">2021-06-18</div>
<div class="lab" style="left:857.66px;top:196.40px">合作伙伴</div>
<div class="dash" style="left:895px;top:200px"></div><div class="dash" style="left:898px;top:200px"></div>
<div class="card" style="left:847.86px;top:214.77px;width:138.14px"></div>
<div class="ctitle" style="left:857.66px;top:226.17px"><span class="l">XXAQYBJ</span>网络安全态势感知<span class="el">...</span></div>
<div class="edit" style="left:973.86px;top:227.77px"><svg width="7" height="7" viewBox="0 0 14 14"><path d="M6.5 1.2 H1.2 V12.8 H12.8 V7.5" fill="none" stroke="#b3b5bb" stroke-width="1.9"/><path d="M6 8 L12.4 1.6" stroke="#b3b5bb" stroke-width="1.9"/></svg></div>
<div class="lab" style="left:857.66px;top:246.57px">客户名称</div>
<div class="val blue" style="left:894.56px;top:246.82px">中国工商银行股份有<span class="el">...</span></div>
<div class="lab" style="left:857.66px;top:258.77px">商机金额</div>
<div class="val num orange" style="left:894.56px;top:258.72px">500,000.00</div>
<div class="lab" style="left:857.66px;top:270.97px">结单日期</div>
<div class="val num dark" style="left:894.56px;top:270.92px">2021-04-16</div>
<div class="lab" style="left:857.66px;top:283.17px">合作伙伴</div>
<div class="dash" style="left:895px;top:287px"></div><div class="dash" style="left:898px;top:287px"></div>
<div class="card" style="left:847.86px;top:301.54px;width:138.14px"></div>
<div class="ctitle" style="left:857.66px;top:312.94px"><span class="l">XXAQYBJweb</span>应用防护墙<span class="l">XC</span><span class="el">...</span></div>
<div class="edit" style="left:973.86px;top:314.54px"><svg width="7" height="7" viewBox="0 0 14 14"><path d="M6.5 1.2 H1.2 V12.8 H12.8 V7.5" fill="none" stroke="#b3b5bb" stroke-width="1.9"/><path d="M6 8 L12.4 1.6" stroke="#b3b5bb" stroke-width="1.9"/></svg></div>
<div class="lab" style="left:857.66px;top:333.34px">客户名称</div>
<div class="val blue" style="left:894.56px;top:333.59px">中国工商银行股份有<span class="el">...</span></div>
<div class="lab" style="left:857.66px;top:345.54px">商机金额</div>
<div class="val num orange" style="left:894.56px;top:345.49px">500,000.00</div>
<div class="lab" style="left:857.66px;top:357.74px">结单日期</div>
<div class="val num dark" style="left:894.56px;top:357.69px">2021-04-16</div>
<div class="lab" style="left:857.66px;top:369.94px">合作伙伴</div>
<div class="dash" style="left:895px;top:374px"></div><div class="dash" style="left:898px;top:374px"></div>
<div class="card" style="left:847.86px;top:388.31px;width:138.14px"></div>
<div class="ctitle" style="left:857.66px;top:399.71px"><span class="l">XXAQYBJ</span>维保服务<span class="l">XCC</span>项目</div>
<div class="edit" style="left:973.86px;top:401.31px"><svg width="7" height="7" viewBox="0 0 14 14"><path d="M6.5 1.2 H1.2 V12.8 H12.8 V7.5" fill="none" stroke="#b3b5bb" stroke-width="1.9"/><path d="M6 8 L12.4 1.6" stroke="#b3b5bb" stroke-width="1.9"/></svg></div>
<div class="lab" style="left:857.66px;top:420.11px">客户名称</div>
<div class="val blue" style="left:894.56px;top:420.36px">中国工商银行股份有<span class="el">...</span></div>
<div class="lab" style="left:857.66px;top:432.31px">商机金额</div>
<div class="val num orange" style="left:894.56px;top:432.26px">4,000,000.00</div>
<div class="lab" style="left:857.66px;top:444.51px">结单日期</div>
<div class="val num dark" style="left:894.56px;top:444.46px">2021-02-15</div>
<div class="lab" style="left:857.66px;top:456.71px">合作伙伴</div>
<div class="dash" style="left:895px;top:461px"></div><div class="dash" style="left:898px;top:461px"></div>
<div class="card" style="left:847.86px;top:475.08px;width:138.14px"></div>
<div class="ctitle" style="left:857.66px;top:486.48px"><span class="l">XXAQYBJ</span> 数据采集、存储<span class="el">...</span></div>
<div class="edit" style="left:973.86px;top:488.08px"><svg width="7" height="7" viewBox="0 0 14 14"><path d="M6.5 1.2 H1.2 V12.8 H12.8 V7.5" fill="none" stroke="#b3b5bb" stroke-width="1.9"/><path d="M6 8 L12.4 1.6" stroke="#b3b5bb" stroke-width="1.9"/></svg></div>
<div class="lab" style="left:857.66px;top:506.88px">客户名称</div>
<div class="val blue" style="left:894.56px;top:507.13px">中国工商银行股份有<span class="el">...</span></div>
<div class="lab" style="left:857.66px;top:519.08px">商机金额</div>
<div class="val num orange" style="left:894.56px;top:519.03px">50,000.00</div>
<div class="lab" style="left:857.66px;top:531.28px">结单日期</div>
<div class="val num dark" style="left:894.56px;top:531.23px">2021-01-16</div>
<div class="lab" style="left:857.66px;top:543.48px">合作伙伴</div>
<div class="dash" style="left:895px;top:547px"></div><div class="dash" style="left:898px;top:547px"></div>
</div>
</body></html>
